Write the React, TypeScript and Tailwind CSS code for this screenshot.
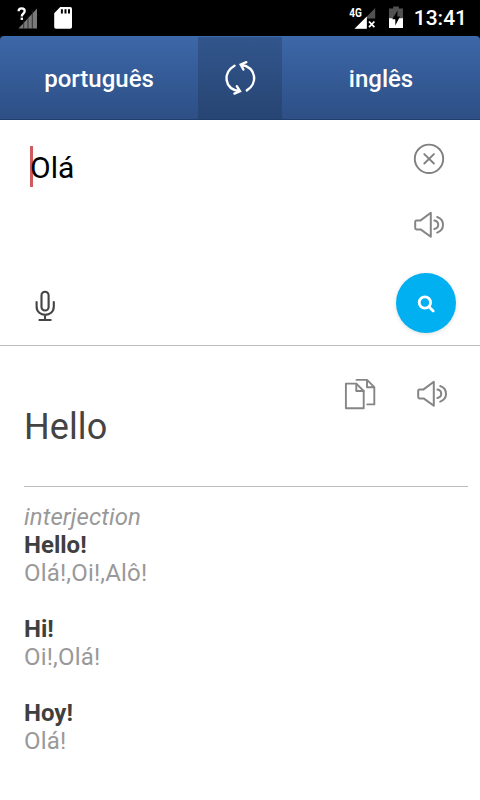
const ENTRIES = [
  { word: "Hello!", meanings: "Olá!,Oi!,Alô!" },
  { word: "Hi!", meanings: "Oi!,Olá!" },
  { word: "Hoy!", meanings: "Olá!" },
];

const SpeakerIcon = () => (
  <svg width="32" height="28" viewBox="0 0 32 28" fill="none" stroke="#858585" strokeWidth="2" strokeLinejoin="round" strokeLinecap="round">
    <path d="M3.6 9.4H7.6L17.8 1.8V25.8L7.6 18.4H3.6Q2.2 18.4 2.2 17V10.8Q2.2 9.4 3.6 9.4Z" />
    <path d="M21.4 9.6Q25.2 10.2 25.2 13.8T21.4 18" />
    <path d="M24.2 6Q30 8 30 13.8T24.2 21.6" />
  </svg>
);

const StatusBar = () => {
  return (
    <div className="flex h-9 items-center justify-between bg-black pr-[13px] pl-[17px] text-white">
      <div className="flex items-center gap-[15px]">
        <svg width="22" height="24" viewBox="0 0 22 24">
          <path d="M1.5 22.5L20 2.5V22.5Z" fill="#7a7a7a" />
          <path d="M6.7 10V23M11 10V23M15.3 4V23" stroke="#222" strokeWidth=".8" />
          <path d="M0 0H10V12L6 16H0Z" fill="#000" />
          <path d="M1.6 5.2Q1.6 2.4 4.7 2.4Q7.7 2.4 7.7 5.1Q7.7 6.6 5.9 8Q4.8 8.9 4.8 10.4" fill="none" stroke="#fff" strokeWidth="2.3" />
          <path d="M3.6 11.6H6V13.9H3.6Z" fill="#fff" />
        </svg>
        <svg width="18" height="24" viewBox="0 0 18 24">
          <path d="M6.2 1H16.2Q18 1 18 2.8V21Q18 22.8 16.2 22.8H2Q.2 22.8 .2 21V7.2Z" fill="#fff" />
          <path d="M7.9 3.2V7.6M11.5 3.2V7.6M15 3.2V7.6" stroke="#000" strokeWidth="2" />
        </svg>
      </div>

      <div className="flex items-center">
        <svg width="28" height="24" viewBox="0 0 28 24" className="mr-3">
          <path d="M6 22.8L26.2 2V12.4H17.8V22.8Z" fill="#515151" />
          <path d="M5.5 22.8L17.8 10.6V22.8Z" fill="#fff" />
          <path d="M20 15.5L25.4 21.1M25.4 15.5L20 21.1" stroke="#fff" strokeWidth="1.8" />
          <text x=".3" y="10.9" fill="#fff" fontSize="13" fontWeight="700" textLength="12.6" lengthAdjust="spacingAndGlyphs">4G</text>
        </svg>
        <svg width="14" height="24" viewBox="0 0 14 24" className="mr-[11px]">
          <path d="M4.2 .6H9.8V2.6H14V12.4H0V2.6H4.2Z" fill="#515151" />
          <path d="M0 12.2H14V22H0Z" fill="#fff" />
          <path d="M8.6 4.6L3.2 13.3H6.3V19.5L11 10.6H8.3Z" fill="#000" />
        </svg>
        <span className="text-[21px] leading-9 font-medium">13:41</span>
      </div>
    </div>
  );
};

const LanguageBar = () => {
  return (
    <div className="bg-black">
      <div className="flex h-[84px] rounded-t-[4px] border-t border-b border-t-[#3c6aae] border-b-[#203d6c] bg-linear-to-b from-[#3c67a8] to-[#2d4f85] text-2xl font-medium text-white">
        <button className="w-[198px] pt-0.5">português</button>
        <button className="flex w-[84px] items-center justify-center bg-[#1c2f4c]/30">
          <svg width="34" height="36" viewBox="0 0 34 36" fill="none" stroke="#fff" strokeWidth="2.4" strokeLinecap="round">
            <path d="M11.5 5.7C-.2 12.2 .5 28.8 16.6 31.3M13.8 26.2L17 31.3L11.4 33.6" />
            <path d="M23.8 30.4C34.8 23.8 33.9 7.5 18 4.7M23.3 2.2L17.7 4.5L20.4 9.5" />
          </svg>
        </button>
        <button className="w-[198px] pt-0.5">inglês</button>
      </div>
    </div>
  );
};

const SourcePanel = () => {
  return (
    <div className="flex h-[226px] justify-between border-b border-[#bcbcbc] pr-6 pl-[30px]">
      <div className="flex flex-col">
        <div className="mt-[26px] flex h-[41px] items-center">
          <span className="h-[41px] w-[3px] bg-[#d05b5c]" />
          <span className="-ml-[3px] pt-0.5 text-[30px] leading-9 text-black">Olá</span>
        </div>
        <svg className="mt-[102px] ml-[3px]" width="24" height="34" viewBox="0 0 24 34" fill="none" stroke="#444" strokeWidth="2.1" strokeLinecap="round">
          <rect x="8.5" y="2.7" width="7.1" height="18.8" rx="3.55" />
          <path d="M3.6 13V17.6C3.6 28.6 20.8 28.6 20.8 17.6V13M12 26V31M6.4 31H17.7" />
        </svg>
      </div>

      <div className="flex w-[60px] flex-col items-center">
        <svg className="mt-[23px] ml-1.5" width="32" height="32" viewBox="0 0 32 32" fill="none" stroke="#808080" strokeWidth="1.9" strokeLinecap="round">
          <circle cx="16" cy="15.8" r="14.2" />
          <path d="M11.3 11.1L20.9 20.5M20.9 11.1L11.3 20.5" />
        </svg>
        <div className="mt-9 ml-1.5">
          <SpeakerIcon />
        </div>
        <button className="mt-[34px] flex h-[60px] w-[60px] items-center justify-center rounded-full bg-[#00b0f0] shadow-[0_1px_4px_rgba(0,0,0,0.14)]">
          <svg width="20" height="20" viewBox="0 0 20 20" fill="none" stroke="#fff" strokeWidth="2.8" strokeLinecap="round">
            <circle cx="8.9" cy="9.5" r="5.7" />
            <path d="M13.4 14.2L17.2 18" />
          </svg>
        </button>
      </div>
    </div>
  );
};

const ResultPanel = () => {
  return (
    <div className="pr-3 pl-6">
      <div className="flex h-[141px] justify-between border-b border-[#bcbcbc]">
        <h1 className="pt-[60px] text-4xl leading-[42px] tracking-[0.1px] text-[#444]">Hello</h1>
        <div className="flex items-start gap-10 pt-8 pr-5">
          <svg width="32" height="33" viewBox="0 0 32 33" fill="none" stroke="#858585" strokeWidth="1.9" strokeLinejoin="round" strokeLinecap="round">
            <path d="M12.3 5.6H1.9V30.3H19.7V13Z" />
            <path d="M12.3 5.6V13H19.7" />
            <path d="M12.5 1.9H23L30.3 9.2V26.4H23.3M23 1.9V9.2H30.3" />
          </svg>
          <div className="mt-0.5">
            <SpeakerIcon />
          </div>
        </div>
      </div>

      <div className="pt-4 text-2xl leading-7 text-[#999]">
        <p className="tracking-[0.1px] italic">interjection</p>
        {ENTRIES.map((entry) => (
          <div key={entry.word} className="mb-7">
            <p className="font-bold text-[#3f3f3f]">{entry.word}</p>
            <p className="tracking-[0.18px]">{entry.meanings}</p>
          </div>
        ))}
      </div>
    </div>
  );
};

const App = () => {
  return (
    <div className="h-[800px] w-[480px] overflow-hidden bg-white font-[Roboto,sans-serif]">
      <StatusBar />
      <LanguageBar />
      <SourcePanel />
      <ResultPanel />
    </div>
  );
};

export default App;
